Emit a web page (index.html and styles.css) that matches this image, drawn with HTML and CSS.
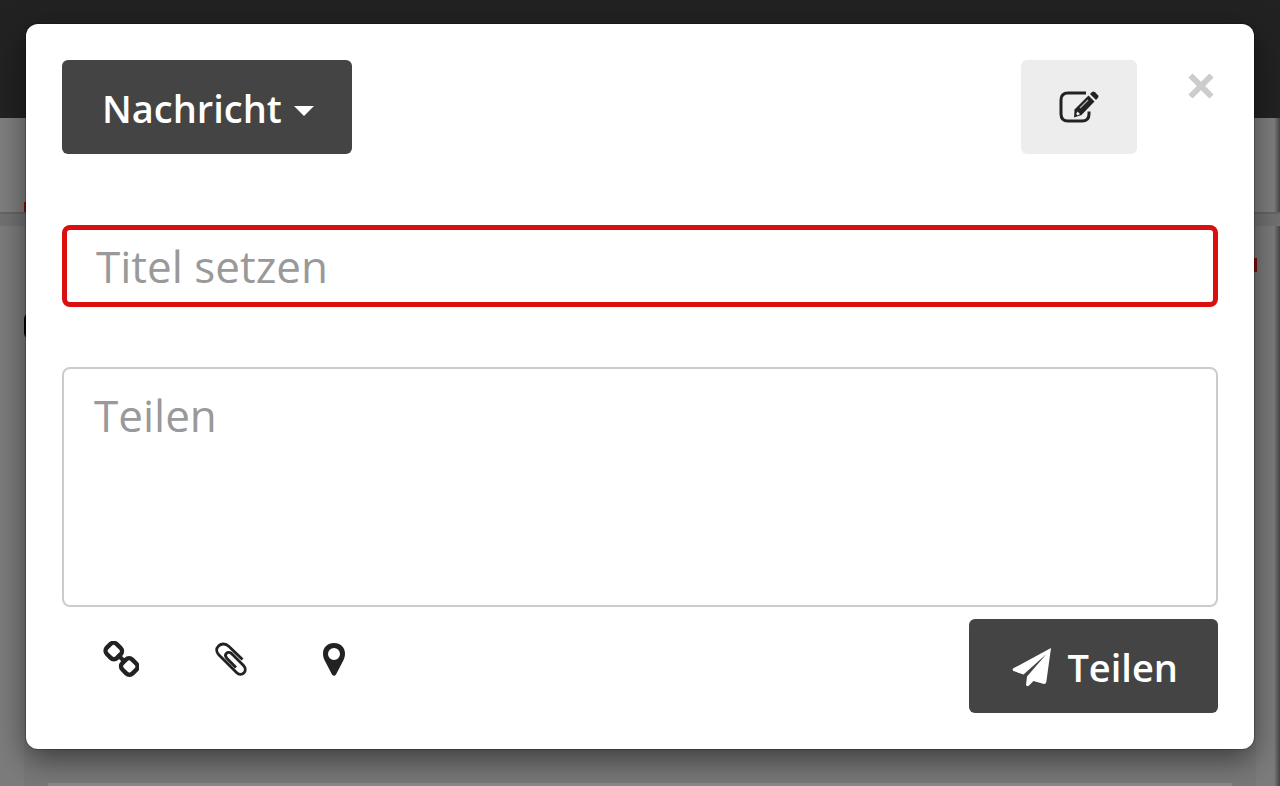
FILE: index.html
```html
<!DOCTYPE html>
<html lang="de">
<head>
<meta charset="utf-8">
<meta name="viewport" content="width=device-width, initial-scale=1">
<title>Nachricht teilen</title>
<link rel="stylesheet" href="styles.css">
</head>
<body>
<div class="page" aria-hidden="true">
  <div class="page-header"></div>
  <div class="page-nav"><span class="nav-marker"></span></div>
  <div class="page-band"></div>
  <div class="page-body">
    <div class="page-panel">
      <span class="badge-right"></span>
      <span class="badge-left"></span>
      <div class="panel-rule"></div>
    </div>
  </div>
</div>
<div class="overlay">
  <form class="modal" role="dialog" aria-label="Nachricht teilen">
    <div class="modal-header">
      <button type="button" class="btn btn-dark">Nachricht<span class="caret"></span></button>
      <div class="header-actions">
        <button type="button" class="btn btn-light" aria-label="Bearbeiten">
          <svg class="icon-edit" viewBox="0 0 40 34" fill="none">
            <path d="M27 3H9Q2 3 2 10V24Q2 31 9 31H23Q30 31 30 24V21.500" stroke="#222" stroke-width="3"/>
            <path d="M29.500 5.500L35.500 11.500L22.500 25L15 27.500L15.500 19.500Z" fill="#222"/>
            <path d="M31 4L33 2Q34.500 1 36 2.300L39 5.300Q40 6.500 39 7.800L37 10Z" fill="#222"/>
            <path d="M21 18L29 10" stroke="#aaa" stroke-width="1.200"/>
            <path d="M18.500 21.500L21 24L18.700 25.500L17.200 24Z" fill="#eee"/>
          </svg>
        </button>
        <button type="button" class="close" aria-label="Schließen">
          <svg class="icon-close" viewBox="0 0 26 26"><path d="M2.500 2.500L23.500 23.500M23.500 2.500L2.500 23.500" stroke="#ccc" stroke-width="6"/></svg>
        </button>
      </div>
    </div>
    <input class="field title-field" type="text" placeholder="Titel setzen" aria-label="Titel setzen">
    <textarea class="field message-field" placeholder="Teilen" aria-label="Teilen"></textarea>
    <div class="modal-footer">
      <div class="tools">
        <button type="button" class="tool" aria-label="Link einfügen">
          <svg class="icon" viewBox="0 0 36 36" fill="none" stroke="#222" stroke-width="4.400">
            <rect x="3.500" y="3" width="14.500" height="14" rx="4.500" transform="rotate(45 10.750 10)"/>
            <rect x="19" y="18.500" width="14.500" height="14" rx="4.500" transform="rotate(45 26.250 25.500)"/>
            <path d="M14.500 13.500L22.500 21.500" stroke-width="4"/>
          </svg>
        </button>
        <button type="button" class="tool" aria-label="Datei anhängen">
          <svg class="icon" viewBox="0 0 36 36" fill="none" stroke="#222" stroke-width="2.800">
            <path d="M31.500 18.500L18 5.500C14.500 2 10 2.500 7.500 5C5 7.500 5 11 8 14L25.500 31.500C28 34 31 33.800 32.800 32C34.800 30 34.800 27 32.500 24.500L21 13C19 11 16.800 11 15.500 12.300C14 13.800 14.200 15.500 15.800 17.200L25 26.500"/>
          </svg>
        </button>
        <button type="button" class="tool" aria-label="Ort hinzufügen">
          <svg class="icon icon-pin" viewBox="0 0 30 36">
            <path fill="#222" fill-rule="evenodd" d="M15 2C8.500 2 4 6.500 4 12.500C4 15.300 4.500 17 5.700 19.500L13 33.500Q15 36 17 33.500L24.300 19.500C25.500 17 26 15.300 26 12.500C26 6.500 21.500 2 15 2ZM15 7A6 6 0 1 0 15 19A6 6 0 1 0 15 7Z"/>
          </svg>
        </button>
      </div>
      <button type="submit" class="btn btn-dark btn-share">
        <svg class="icon-send" viewBox="0 0 40 40" fill="#fff">
          <path d="M39 1L1 21.500Q0 23 1.500 24L11.500 27.500L34.500 7L15 29.500L14 38Q15 40 17 38.500L21.500 34L32 37Q34 37 34.300 35Z"/>
        </svg>Teilen
      </button>
    </div>
  </form>
</div>
</body>
</html>
```
FILE: styles.css
```css
* { box-sizing: border-box; }
body {
  margin: 0;
  font-family: "Open Sans", sans-serif;
  background: #7f7f7f;
  overflow: hidden;
}
button { font-family: inherit; cursor: pointer; }
.page {
  display: flex;
  flex-direction: column;
  min-height: 100vh;
}
.page-header { height: 118px; background: #222; }
.page-nav {
  position: relative;
  height: 96px;
  background: linear-gradient(to left, #444, #7f7f7f 6px);
  border-bottom: 2px solid #666;
}
.nav-marker {
  position: absolute;
  left: 24px;
  bottom: 0;
  width: 60px;
  height: 10px;
  background: #851010;
}
.page-band { height: 12px; background: #727272; }
.page-body {
  flex: 1;
  display: flex;
  padding: 0 24px;
  background: linear-gradient(to left, #444, #7c7c7c 6px);
}
.page-panel {
  position: relative;
  flex: 1;
  display: flex;
  align-items: flex-end;
  padding: 0 24px;
  background: #787878;
}
.panel-rule { flex: 1; height: 3px; background: #898989; }
.badge-right {
  position: absolute;
  right: -1px;
  top: 32px;
  width: 20px;
  height: 14px;
  background: #850c0c;
}
.badge-left {
  position: absolute;
  left: 0;
  top: 87px;
  width: 24px;
  height: 26px;
  border-radius: 6px;
  background: #000;
}
.overlay {
  position: absolute;
  inset: 0;
  padding: 24px 26px;
}
.modal {
  display: flex;
  flex-direction: column;
  padding: 36px;
  background: #fff;
  border-radius: 12px;
  box-shadow: 0 0 0 1px rgba(0, 0, 0, .2), 0 10px 30px rgba(0, 0, 0, .5);
}
.modal-header, .modal-footer {
  display: flex;
  justify-content: space-between;
  align-items: flex-start;
}
.header-actions { display: flex; align-items: flex-start; gap: 47px; }
.btn {
  display: flex;
  align-items: center;
  justify-content: center;
  padding: 21px 38px 19px 40px;
  border: 0;
  border-radius: 6px;
  font-size: 38px;
  font-weight: 600;
  line-height: 54px;
}
.btn-dark { background: #444; color: #fff; }
.btn-light { width: 116px; height: 94px; padding: 0; background: #ededed; }
.caret {
  margin: 6px 0 0 12px;
  border: 10px solid transparent;
  border-top-color: #fff;
  border-bottom: 0;
}
.close {
  display: flex;
  padding: 13px 4px;
  border: 0;
  background: none;
}
.icon-close { width: 26px; height: 26px; }
.icon-edit { width: 40px; height: 34px; }
.field {
  width: 100%;
  border-radius: 8px;
  background: #fff;
  color: #444;
  font-family: inherit;
  font-size: 44px;
  line-height: 60px;
  outline: 0;
}
.field::placeholder { color: #999; opacity: 1; }
.title-field {
  height: 82px;
  margin-top: 71px;
  padding: 0 29px;
  border: 5px solid #d9100f;
}
.message-field {
  display: block;
  height: 240px;
  margin-top: 60px;
  padding: 16px 30px;
  border: 2px solid #ccc;
  resize: none;
}
.modal-footer { margin-top: 12px; }
.tools { display: flex; gap: 32px; padding: 0 0 0 21px; }
.tool {
  display: flex;
  padding: 22px 20px;
  border: 0;
  background: none;
}
.icon { width: 36px; height: 36px; }
.icon-pin { width: 30px; }
.icon-send { width: 40px; height: 40px; margin-right: 15px; }
.btn-share { padding-left: 43px; padding-right: 40px; }
```
